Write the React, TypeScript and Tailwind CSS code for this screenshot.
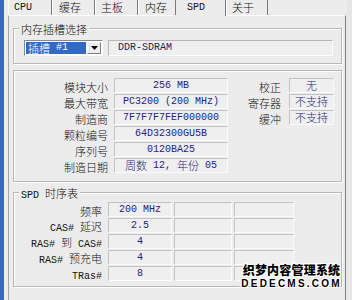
import clsx from 'clsx';
import type { ReactNode } from 'react';

const CJK = /[\u3000-\u9fff\uff00-\uffef]/;

// mixed text: CJK runs in a CJK face, ASCII runs in a narrow mono face (like SimSun)
function Txt({ s }: { s: string }) {
  const parts = s.match(/[\u3000-\u9fff\uff00-\uffef]+|[^\u3000-\u9fff\uff00-\uffef]+/g) ?? [];
  return (
    <>
      {parts.map((p, i) =>
        CJK.test(p) ? (
          <span key={i} className="font-['Noto_Sans_CJK_SC',sans-serif] text-[11px] font-light">
            {p}
          </span>
        ) : (
          <span key={i} className="whitespace-pre font-['Liberation_Mono',monospace] text-[10px]">
            {p}
          </span>
        ),
      )}
    </>
  );
}

function Field({ children, className }: { children?: ReactNode; className?: string }) {
  return (
    <div
      className={clsx(
        'flex h-[15px] shrink-0 items-center justify-center border border-[#c2c2c2] border-b-[#fafafa] border-r-[#fafafa] bg-[#efefef] leading-none text-[#24247a]',
        className,
      )}
    >
      {children}
    </div>
  );
}

function Group({ title, className, children }: { title?: string; className?: string; children: ReactNode }) {
  return (
    <div
      className={clsx(
        'relative border border-[#b8b8b8] shadow-[inset_1px_1px_0_#fff,1px_1px_0_#fff]',
        className,
      )}
    >
      {title && (
        <div className="absolute left-[5px] top-[-8px] bg-[#ececec] px-[2px] leading-[14px]">
          <Txt s={title} />
        </div>
      )}
      {children}
    </div>
  );
}

const tabs = [
  { name: 'CPU', w: 'w-[44px]', pl: 'pl-[5px]' },
  { name: '缓存', w: 'w-[43px]', pl: 'pl-[6px]' },
  { name: '主板', w: 'w-[43px]', pl: 'pl-[5px]' },
  { name: '内存', w: 'w-[38px]', pl: 'pl-[6px]' },
  { name: 'SPD', w: 'w-[50px]', pl: 'pl-[11px]', active: true },
  { name: '关于', w: 'w-[42px]', pl: 'pl-[5px]' },
];

const moduleRows: { label: string; value: string; side?: [string, string] }[] = [
  { label: '模块大小', value: '256 MB', side: ['校正', '无'] },
  { label: '最大带宽', value: 'PC3200 (200 MHz)', side: ['寄存器', '不支持'] },
  { label: '制造商', value: '7F7F7F7FEF000000', side: ['缓冲', '不支持'] },
  { label: '颗粒编号', value: '64D32300GU5B' },
  { label: '序列号', value: '0120BA25' },
  { label: '制造日期', value: '周数 12, 年份 05' },
];

const timingRows = [
  { label: '频率', value: '200 MHz' },
  { label: 'CAS# 延迟', value: '2.5' },
  { label: 'RAS# 到 CAS#', value: '4' },
  { label: 'RAS# 预充电', value: '4' },
  { label: 'TRas#', value: '8' },
];

export default function App() {
  return (
    <div className="relative flex h-[300px] w-[352px] overflow-hidden bg-[#ececec] text-[#111]">
      {/* window frame */}
      <div className="w-[4px] shrink-0 bg-[#3767c2]" />

      <div className="flex w-[343px] shrink-0 flex-col pl-[4px]">
        {/* tabs */}
        <div className="flex h-[15px] shrink-0 items-stretch">
          {tabs.map((t) => (
            <div
              key={t.name}
              className={clsx(
                'flex shrink-0 items-center border-r border-r-[#7a7a7a] leading-none',
                t.w,
                t.pl,
                t.active ? 'relative z-10 -mb-px bg-[#ececec]' : 'border-l border-l-white',
              )}
            >
              <Txt s={t.name} />
            </div>
          ))}
        </div>

        {/* tab page */}
        <div className="flex w-[338px] flex-1 flex-col border-l border-r border-t border-l-[#a6a6a6] border-r-[#7c7c7c] border-t-white pl-[4px] pr-[3px] pt-[12px]">
          <Group title="内存插槽选择" className="h-[36px]">
            <div className="flex pl-[10px] pr-[8px] pt-[11px]">
              <div className="flex h-[16px] w-[79px] items-stretch border border-[#8a8a8a] border-b-white border-r-white bg-white p-px">
                <div className="flex flex-1 items-center bg-[#316ac5] pl-[2px] leading-none text-white">
                  <Txt s="插槽 #1" />
                </div>
                <div className="ml-px flex w-[14px] items-center justify-center border border-[#f8f8f8] border-b-[#808080] border-r-[#808080] bg-[#ececec]">
                  <svg width="7" height="4" viewBox="0 0 7 4">
                    <path d="M0 0H7L3.5 4Z" fill="#000" />
                  </svg>
                </div>
              </div>
              <div className="ml-[5px] flex h-[16px] flex-1 items-center border border-[#b6b6b6] border-b-white border-r-white bg-[#efefef] pl-[9px] leading-none text-[#1e1e5e]">
                <Txt s="DDR-SDRAM" />
              </div>
            </div>
          </Group>

          <Group className="mt-[6px] h-[112px]">
            <div className="flex flex-col gap-px pt-[7px]">
              {moduleRows.map((r) => (
                <div key={r.label} className="flex h-[15px] items-center">
                  <div className="w-[94px] shrink-0 text-right leading-none">
                    <Txt s={r.label} />
                  </div>
                  <Field className="ml-[6px] w-[114px]">
                    <Txt s={r.value} />
                  </Field>
                  {r.side && (
                    <>
                      <div className="w-[53px] shrink-0 text-right leading-none">
                        <Txt s={r.side[0]} />
                      </div>
                      <Field className="ml-[8px] w-[45px]">
                        <Txt s={r.side[1]} />
                      </Field>
                    </>
                  )}
                </div>
              ))}
            </div>
          </Group>

          <Group title="SPD 时序表" className="mt-[10px] h-[95px]">
            <div className="flex flex-col gap-px pt-[9px]">
              {timingRows.map((r) => (
                <div key={r.label} className="flex h-[15px] items-center">
                  <div className="w-[88px] shrink-0 text-right leading-none">
                    <Txt s={r.label} />
                  </div>
                  <Field className="ml-[6px] w-[64px]">
                    <Txt s={r.value} />
                  </Field>
                  <Field className="ml-[2px] w-[58px]" />
                  <Field className="ml-[2px] w-[60px]" />
                </div>
              ))}
            </div>
          </Group>
        </div>
      </div>

      <div className="flex-1 bg-[#e6e6e6]" />

      {/* watermark */}
      <div className="pointer-events-none absolute left-[242px] top-[264px] flex w-[99px] flex-col items-center leading-none text-black [text-shadow:1px_0_0_#fff,-1px_0_0_#fff,0_1px_0_#fff,0_-1px_0_#fff,1px_1px_0_#fff,-1px_-1px_0_#fff,1px_-1px_0_#fff,-1px_1px_0_#fff]">
        <span className="font-['Noto_Sans_CJK_SC',sans-serif] text-[12px] font-black tracking-[0.2px]">织梦内容管理系统</span>
        <span className="mt-[3px] font-['Liberation_Sans',sans-serif] text-[10px] font-bold tracking-[2.2px]">DEDECMS.COM</span>
      </div>
    </div>
  );
}
